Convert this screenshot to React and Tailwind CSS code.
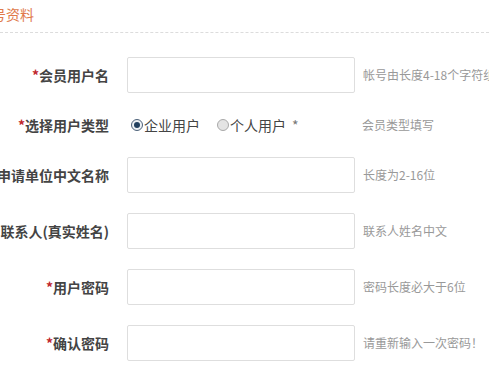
import React from "react";

const font = { fontFamily: '"Noto Sans CJK SC", "Microsoft YaHei", sans-serif' };

function Row({ label, star = true, hint, children }) {
  return (
    <div className="flex items-center">
      <div className="w-[109px] shrink-0 flex justify-end whitespace-nowrap text-[14px] font-bold text-[#444] leading-none">
        {star && <span className="text-[#c0262d]">*</span>}
        <span>{label}</span>
      </div>
      <div className="ml-[18px] shrink-0">{children}</div>
      <div className="ml-[8px] whitespace-nowrap text-[12px] text-[#999] leading-none">{hint}</div>
    </div>
  );
}

function Input() {
  return <div className="w-[228px] h-[36px] border border-[#dedede] rounded-[2px] bg-white" />;
}

function Radio({ checked }) {
  return checked ? (
    <span className="w-[12px] h-[12px] rounded-full border border-[#4d6279] bg-[#eef2f6] flex items-center justify-center shrink-0">
      <span className="w-[6px] h-[6px] rounded-full bg-[#22405f]" />
    </span>
  ) : (
    <span className="w-[12px] h-[12px] rounded-full border border-[#a9a9a9] bg-[#e4e4e4] shrink-0" />
  );
}

export default function App() {
  return (
    <div className="w-[489px] h-[367px] overflow-hidden bg-white" style={font}>
      <div className="h-[33px] border-b border-dashed border-[#dcdcdc] flex items-center">
        <span className="-ml-[22px] -mt-[5px] text-[14px] text-[#e0794a] whitespace-nowrap leading-none">账号资料</span>
      </div>
      <div className="pt-[24px] flex flex-col gap-[20px]">
        <Row label="会员用户名" hint="帐号由长度4-18个字符组成">
          <Input />
        </Row>
        <div className="flex items-center h-[24px]">
          <div className="w-[109px] shrink-0 flex justify-end whitespace-nowrap text-[14px] font-bold text-[#444] leading-none">
            <span className="text-[#c0262d]">*</span>
            <span>选择用户类型</span>
          </div>
          <div className="ml-[22px] w-[223px] shrink-0 flex items-center text-[14px] text-[#444] leading-none whitespace-nowrap">
            <Radio checked />
            <span className="ml-[1px]">企业用户</span>
            <span className="ml-[17px] flex"><Radio /></span>
            <span className="ml-[1px]">个人用户</span>
            <span className="ml-[6px] text-[#777]">*</span>
          </div>
          <div className="ml-[8px] whitespace-nowrap text-[12px] text-[#999] leading-none">会员类型填写</div>
        </div>
        <Row label="申请单位中文名称" hint="长度为2-16位">
          <Input />
        </Row>
        <Row label="联系人(真实姓名)" hint="联系人姓名中文">
          <Input />
        </Row>
        <Row label="用户密码" hint="密码长度必大于6位">
          <Input />
        </Row>
        <Row label="确认密码" hint="请重新输入一次密码！">
          <Input />
        </Row>
      </div>
    </div>
  );
}
